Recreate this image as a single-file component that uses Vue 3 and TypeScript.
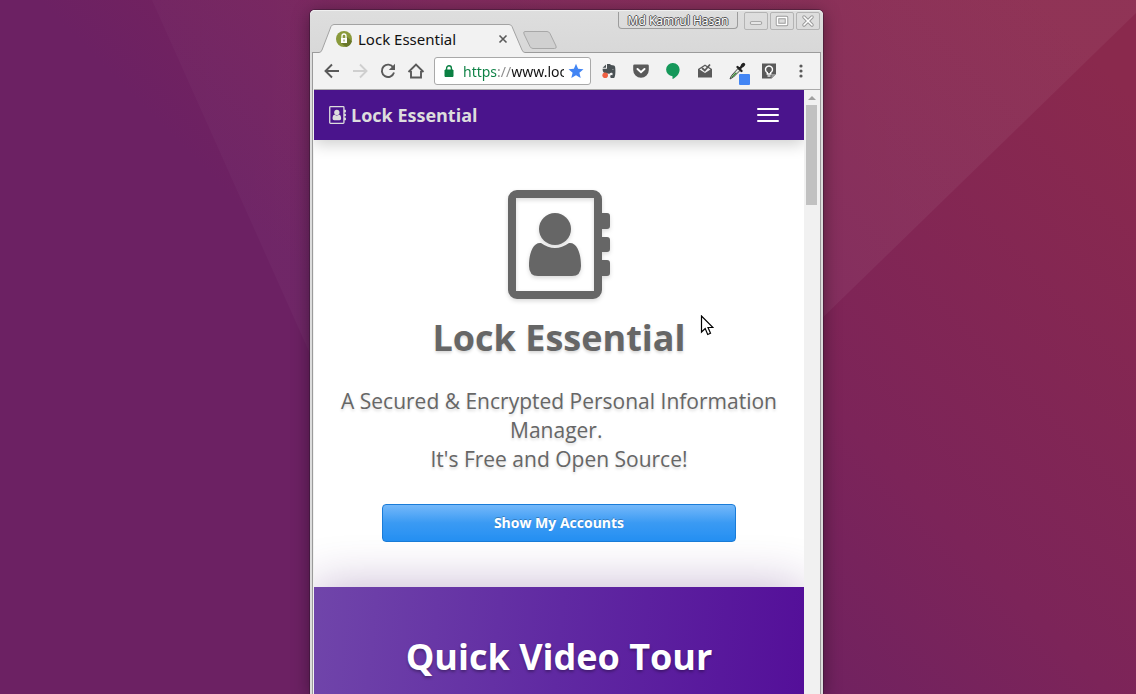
<script setup lang="ts">
import { ref } from 'vue'

const address = ref('https://www.lockessential.com')

interface WindowControl {
  name: string
  path: string
}

const controls: WindowControl[] = [
  { name: 'Minimize', path: 'M6.500 10h9' },
  { name: 'Maximize', path: 'M6.500 4.500h9v7h-9z' },
  { name: 'Close', path: 'M7 4l8 8M15 4l-8 8' },
]
</script>

<template>
  <div class="desktop">
    <svg class="wallpaper" viewBox="0 0 1136 694" preserveAspectRatio="none" aria-hidden="true">
      <defs>
        <linearGradient id="wall" gradientUnits="userSpaceOnUse" x1="620" y1="600" x2="1136" y2="100">
          <stop offset="0" stop-color="#6c2163" />
          <stop offset=".4" stop-color="#7c2459" />
          <stop offset="1" stop-color="#8a294d" />
        </linearGradient>
        <linearGradient id="ray" gradientUnits="userSpaceOnUse" x1="152" y1="0" x2="900" y2="0">
          <stop offset="0" stop-color="#fff" stop-opacity=".02" />
          <stop offset="1" stop-color="#fff" stop-opacity=".05" />
        </linearGradient>
      </defs>
      <path d="M0 0H1136V694H0z" fill="url(#wall)" />
      <path d="M152 0H1136V13L454 676z" fill="url(#ray)" />
    </svg>

    <section class="window">
      <header class="titlebar">
        <div class="tab">
          <svg class="tab-shape" viewBox="0 0 206 29" preserveAspectRatio="none" aria-hidden="true">
            <path d="M0 28.500Q2 28.500 3 26L12 2.500Q13 .5 15 .5H190Q192 .5 193 2.500L203 26Q204 28.500 206 28.500V29H0z" fill="#f2f2f2" />
            <path d="M0 28.500Q2 28.500 3 26L12 2.500Q13 .5 15 .5H190Q192 .5 193 2.500L203 26Q204 28.500 206 28.500" fill="none" stroke="#a3a3a3" />
          </svg>
          <svg class="favicon" viewBox="0 0 16 16" aria-hidden="true">
            <circle cx="8" cy="8" r="8" fill="#8a9a3c" />
            <path d="M11 6l5 4a8 8 0 0 1-6 6l-5-4z" fill="#69772a" />
            <path d="M5 7h6v5H5z" fill="#fff" />
            <path d="M6 7V5a2 2 0 0 1 4 0v2" fill="none" stroke="#fff" stroke-width="1.300" />
            <path d="M7.500 8.500h1v2h-1z" fill="#76853a" />
          </svg>
          <span class="tab-title">Lock Essential</span>
          <button class="tab-close" type="button" aria-label="Close tab">
            <svg viewBox="0 0 10 10"><path d="M1.500 1.500l7 7M8.500 1.500l-7 7" stroke="#5a5a5a" stroke-width="1.600" /></svg>
          </button>
        </div>
        <button class="new-tab" type="button" aria-label="New tab">
          <svg viewBox="0 0 34 18">
            <path d="M2 .5H24Q26 .5 27 2.500L33 15Q34 17.500 31.500 17.500H10Q8 17.500 7 15.500L1 3Q0 .5 2 .5z" fill="#d0d0d0" stroke="#a8a8a8" />
          </svg>
        </button>
        <div class="window-controls">
          <button class="profile" type="button">Md Kamrul Hasan</button>
          <button v-for="c in controls" :key="c.name" class="control" type="button" :aria-label="c.name">
            <svg viewBox="0 0 22 16">
              <path :d="c.path" fill="none" stroke="#999" stroke-width="3.500" stroke-linejoin="round" stroke-linecap="round" />
              <path :d="c.path" fill="none" stroke="#fff" stroke-width="1.600" stroke-linejoin="round" stroke-linecap="round" />
            </svg>
          </button>
        </div>
      </header>

      <div class="frame">
        <nav class="toolbar" aria-label="Browser">
          <button class="nav" type="button" aria-label="Back">
            <svg viewBox="0 0 16 16"><path d="M15 8H2M8 1.500L1.500 8 8 14.500" fill="none" stroke="#5a5a5a" stroke-width="1.900" /></svg>
          </button>
          <button class="nav" type="button" aria-label="Forward">
            <svg viewBox="0 0 16 16"><path d="M1 8h13M8 1.500L14.500 8 8 14.500" fill="none" stroke="#cfcfcf" stroke-width="1.900" /></svg>
          </button>
          <button class="nav" type="button" aria-label="Reload">
            <svg viewBox="0 0 16 16">
              <path d="M13.300 4.500A6.200 6.200 0 1 0 14 9.500" fill="none" stroke="#5a5a5a" stroke-width="1.900" />
              <path d="M15 .8V7H8.800z" fill="#5a5a5a" />
            </svg>
          </button>
          <button class="nav" type="button" aria-label="Home">
            <svg class="home" viewBox="0 0 18 16"><path d="M1.500 9L9 1.500 16.500 9M4 8v6.500h10V8" fill="none" stroke="#5a5a5a" stroke-width="1.900" /></svg>
          </button>

          <div class="omnibox">
            <svg class="padlock" viewBox="0 0 10 12" aria-hidden="true">
              <path d="M1 5h8v6.500H1z" fill="#0b8043" stroke="#0b8043" />
              <path d="M2.600 5V3.200a2.400 2.400 0 0 1 4.800 0V5" fill="none" stroke="#0b8043" stroke-width="1.400" />
            </svg>
            <input v-model="address" class="address" type="text" aria-label="Address" spellcheck="false" />
            <button class="star" type="button" aria-label="Bookmark">
              <svg viewBox="0 0 16 16"><path d="M8 .8l2.100 5 5.400.4-4.100 3.500 1.300 5.300L8 12.200l-4.700 2.800 1.300-5.300L.5 6.200l5.400-.4z" fill="#4285f4" /></svg>
            </button>
          </div>

          <button class="ext" type="button" aria-label="Evernote">
            <svg viewBox="0 0 16 16">
              <path d="M5 1.500v3.200H1.600z" fill="#4a5154" />
              <path d="M6 1h3l1 1 3 .4c1 .3 1.300 1.500 1.400 4.600.1 4-.4 7.500-1.400 8H10c-1-.4-1-2.500 0-3l1.500.2V10c-1.500-.5-2.500 0-3 .8L6 10.600 3 9.800C2 9 1.600 7.500 1.600 5.700H6z" fill="#4a5154" />
              <path d="M11.500 6l1.500.8h-1.600z" fill="#ddd" />
              <circle cx="4.200" cy="12.300" r="2.800" fill="#ee6043" />
            </svg>
          </button>
          <button class="ext" type="button" aria-label="Pocket">
            <svg viewBox="0 0 16 16">
              <path d="M1.500 1.500h13q1.300 0 1.300 1.300V7A7.700 7.700 0 0 1 .2 7V2.800Q.2 1.500 1.500 1.500z" fill="#5a5a5a" />
              <path d="M4.500 6L8 9.200 11.500 6" fill="none" stroke="#fff" stroke-width="2" stroke-linecap="round" />
            </svg>
          </button>
          <button class="ext" type="button" aria-label="Hangouts">
            <svg viewBox="0 0 16 16"><path d="M8 0a6.600 6.600 0 0 0-.5 13.200V16C11 14.500 14.600 11 14.600 6.700A6.600 6.600 0 0 0 8 0z" fill="#15985a" /></svg>
          </button>
          <button class="ext" type="button" aria-label="Inbox">
            <svg viewBox="0 0 16 16">
              <path d="M1 6L8 1.500 15 6v8.500H1z" fill="#5a5a5a" />
              <path d="M2.500 6.500L8 10l5.500-3.500L8 3z" fill="#f2f2f2" />
              <path d="M5 5l2.800 2.500L13 1.500" fill="none" stroke="#5a5a5a" stroke-width="1.800" />
            </svg>
          </button>
          <button class="ext" type="button" aria-label="Colour picker">
            <svg class="dropper" viewBox="0 0 20 22">
              <path d="M3 19L4.500 15.500 11 8.500l2 2L6.500 17z" fill="#dfeadd" stroke="#444" />
              <path d="M4 18l1.500-2.500 3-3 1.500.5-4 4z" fill="#3f8b3b" />
              <path d="M10.500 7L14.500 11M13 8.500L15.500 5.500" stroke="#222" stroke-width="2.400" stroke-linecap="round" />
              <path d="M15.500 5.500L16.500 4.500" stroke="#222" stroke-width="3.400" stroke-linecap="round" />
              <path d="M13 14h9a1 1 0 0 1 1 1v9a1 1 0 0 1-1 1h-9a1 1 0 0 1-1-1v-9a1 1 0 0 1 1-1z" fill="#4285f4" />
            </svg>
          </button>
          <button class="ext" type="button" aria-label="Keep">
            <svg viewBox="0 0 16 16">
              <path d="M1 .5h14V11l-4.500 4.500H1z" fill="#5a5a5a" />
              <path d="M15 11l-4.500 4.500V11z" fill="#999" />
              <path d="M6.300 9.500A3.500 3.500 0 1 1 9.700 9.500V11H6.300z" fill="none" stroke="#fff" stroke-width="1.400" />
              <path d="M6.500 13h3" stroke="#fff" stroke-width="1.300" />
            </svg>
          </button>
          <button class="ext" type="button" aria-label="Menu">
            <svg viewBox="0 0 16 16" fill="#5a5a5a"><circle cx="8" cy="3" r="1.600" /><circle cx="8" cy="8" r="1.600" /><circle cx="8" cy="13" r="1.600" /></svg>
          </button>
        </nav>

        <div class="viewport">
          <div class="page">
            <header class="navbar">
              <a class="brand" href="#home">
                <svg class="brand-icon" viewBox="508 190 102 109" aria-hidden="true">
                  <path d="M517 190h76a9 9 0 0 1 9 9v14h5q3 0 3 3v10q0 3-3 3h-5v8h5q3 0 3 3v9q0 3-3 3h-5v8h5q3 0 3 3v10q0 3-3 3h-5v14a9 9 0 0 1-9 9h-76a9 9 0 0 1-9-9v-91a9 9 0 0 1 9-9zM516 198v93h78v-93z" fill-rule="evenodd" />
                  <circle cx="555" cy="229" r="16" />
                  <path d="M541 243q14 10 28 0c8-1 12 10 12 23q0 10-9 10h-34q-9 0-9-10c0-13 4-24 12-23z" />
                </svg>
                Lock Essential
              </a>
              <button class="burger" type="button" aria-label="Toggle navigation"><span></span><span></span><span></span></button>
            </header>

            <main class="hero">
              <svg class="hero-icon" viewBox="508 190 102 109" aria-hidden="true">
                <path d="M517 190h76a9 9 0 0 1 9 9v14h5q3 0 3 3v10q0 3-3 3h-5v8h5q3 0 3 3v9q0 3-3 3h-5v8h5q3 0 3 3v10q0 3-3 3h-5v14a9 9 0 0 1-9 9h-76a9 9 0 0 1-9-9v-91a9 9 0 0 1 9-9zM516 198v93h78v-93z" fill-rule="evenodd" />
                <circle cx="555" cy="229" r="16" />
                <path d="M541 243q14 10 28 0c8-1 12 10 12 23q0 10-9 10h-34q-9 0-9-10c0-13 4-24 12-23z" />
              </svg>
              <h1>Lock Essential</h1>
              <p class="lead">A Secured &amp; Encrypted Personal Information Manager.&nbsp;<br />It's Free and Open Source!</p>
              <button class="cta" type="button">Show My Accounts</button>
            </main>

            <section class="tour">
              <h2>Quick Video Tour</h2>
            </section>
          </div>
          <div class="scrollbar" aria-hidden="true">
            <svg viewBox="0 0 16 15"><path d="M4 10L8 6l4 4z" fill="#a0a0a0" /></svg>
            <div class="thumb"></div>
          </div>
        </div>
      </div>
    </section>

    <svg class="cursor" viewBox="0 0 14 22" aria-hidden="true">
      <path d="M1.500 1v16l3.700-3.500L7.700 19.500l2.800-1.200L8 12.500h5z" fill="#fff" stroke="#000" stroke-width="1.200" />
    </svg>
  </div>
</template>

<style>
body {
  margin: 0;
  background: #6c2163;
}
</style>

<style scoped>
.desktop {
  position: relative;
  display: grid;
  grid-template-columns: 310fr 513fr 313fr;
  box-sizing: border-box;
  height: 100vh;
  padding-top: 10px;
  overflow: hidden;
  font-family: "Open Sans", "Noto Sans", sans-serif;
}
.wallpaper {
  position: absolute;
  inset: 0;
  width: 100%;
  height: 100%;
}
button {
  padding: 0;
  border: 0;
  background: none;
  font-family: inherit;
}
svg {
  display: block;
}
.window {
  position: relative;
  grid-column: 2;
  display: flex;
  flex-direction: column;
  min-width: 0;
  min-height: 0;
  border-radius: 5px 5px 0 0;
  background: #dcdcdc;
  box-shadow: 0 0 0 1px rgba(40, 20, 40, 0.4), 0 3px 18px rgba(0, 0, 0, 0.4);
}
.titlebar {
  display: flex;
  align-items: flex-end;
  height: 43px;
  padding: 0 3px 0 9px;
  border-radius: 5px 5px 0 0;
  box-sizing: border-box;
  background: linear-gradient(#dedede, #d8d8d8);
  box-shadow: inset 0 1px #f0f0f0;
}
.tab {
  position: relative;
  z-index: 1;
  display: flex;
  align-items: center;
  box-sizing: border-box;
  width: 206px;
  height: 29px;
  padding: 0 17px 0 17px;
}
.tab-shape {
  position: absolute;
  inset: 0;
  width: 100%;
  height: 100%;
}
.favicon {
  position: relative;
  width: 16px;
  height: 16px;
  margin-right: 6px;
}
.tab-title {
  position: relative;
  flex: 1;
  font-family: "Noto Sans", sans-serif;
  font-size: 15px;
  color: #111;
  white-space: nowrap;
}
.tab-close {
  position: relative;
  width: 10px;
  height: 10px;
}
.new-tab {
  width: 34px;
  height: 18px;
  margin: 0 0 4px -2px;
}
.window-controls {
  display: flex;
  align-self: flex-start;
  gap: 2px;
  margin-left: auto;
  padding-top: 2px;
}
.profile {
  width: 120px;
  height: 17px;
  margin-right: 4px;
  border: 1px solid #9c9c9c;
  border-top: 0;
  border-radius: 0 0 4px 4px;
  font-family: "Noto Sans", sans-serif;
  font-size: 12px;
  line-height: 15px;
  color: #fff;
  white-space: nowrap;
  text-shadow: 1px 0 #555, -1px 0 #555, 0 1px #555, 0 -1px #555;
}
.control {
  width: 24px;
  height: 18px;
  border: 1px solid #b4b4b4;
  border-radius: 2px;
}
.control svg {
  width: 22px;
  height: 16px;
}
.frame {
  display: flex;
  flex: 1;
  flex-direction: column;
  min-height: 0;
  margin: -1px 2px 0;
  padding-left: 1px;
  border: 1px solid #9b9b9b;
  border-bottom: 0;
  background: #f2f2f2;
}
.toolbar {
  display: flex;
  align-items: center;
  box-sizing: border-box;
  height: 37px;
  padding: 0 3px 0 4px;
  border-bottom: 1px solid #aaa;
}
.nav,
.ext {
  display: grid;
  place-items: center;
  flex: none;
  width: 28px;
  height: 28px;
}
.ext {
  width: 32px;
}
.nav svg,
.ext svg {
  width: 16px;
  height: 16px;
}
.nav .home {
  width: 18px;
}
.ext .dropper {
  width: 20px;
  height: 22px;
  overflow: visible;
}
.omnibox {
  display: flex;
  flex: 1;
  align-items: center;
  gap: 9px;
  min-width: 0;
  height: 26px;
  margin: 0 2px 0 4px;
  padding: 0 6px 0 9px;
  border: 1px solid #a9a9a9;
  border-radius: 3px;
  background: #fff;
}
.padlock {
  flex: none;
  width: 10px;
  height: 12px;
}
.address {
  flex: 1;
  min-width: 0;
  height: 24px;
  padding: 0;
  border: 0;
  outline: 0;
  background: linear-gradient(90deg, #0b8043 35px, #8a8a8a 35px 49px, #111 49px);
  background-clip: text;
  -webkit-background-clip: text;
  color: transparent;
  font-family: "Noto Sans", sans-serif;
  font-size: 14px;
}
.star {
  flex: none;
  width: 16px;
  height: 16px;
  margin-left: -5px;
}
.viewport {
  display: flex;
  flex: 1;
  min-height: 0;
}
.page {
  display: flex;
  flex: 1;
  flex-direction: column;
  min-width: 0;
  overflow: hidden;
  background: #fff;
}
.navbar {
  position: relative;
  z-index: 1;
  display: flex;
  flex: none;
  align-items: center;
  justify-content: space-between;
  height: 50px;
  padding: 0 25px 0 15px;
  background: #4a148c;
  box-shadow: 0 4px 16px rgba(0, 0, 0, 0.2);
}
.brand {
  display: flex;
  align-items: center;
  gap: 5px;
  color: #ddd;
  font-size: 18px;
  font-weight: 700;
  text-decoration: none;
}
.brand-icon {
  width: 17px;
  height: 18px;
  fill: currentColor;
}
.burger {
  display: flex;
  flex-direction: column;
  gap: 4px;
  width: 22px;
}
.burger span {
  height: 2px;
  border-radius: 1px;
  background: #fff;
}
.hero {
  display: flex;
  flex: none;
  flex-direction: column;
  align-items: center;
  padding: 50px 9px 45px;
  color: #666;
  text-align: center;
  text-shadow: 0 2px 3px rgba(0, 0, 0, 0.15);
}
.hero-icon {
  width: 102px;
  height: 109px;
  fill: #666;
  filter: drop-shadow(0 2px 2px rgba(0, 0, 0, 0.15));
}
h1,
h2 {
  margin: 0;
  font-size: 36px;
  font-weight: 700;
  line-height: 40px;
}
h1 {
  margin-top: 19px;
}
.lead {
  margin: 29px 0 30px;
  font-size: 21px;
  line-height: 29px;
}
.cta {
  width: 75%;
  height: 38px;
  padding-bottom: 2px;
  border: 1px solid #1a7cd8;
  border-radius: 4px;
  background: linear-gradient(#74b8fa, #3a9af3 50%, #2590f3);
  color: #fff;
  font-size: 14px;
  font-weight: 700;
  text-shadow: 0 -1px rgba(0, 0, 0, 0.25);
}
.tour {
  position: relative;
  flex: 1;
  padding-top: 50px;
  background: linear-gradient(95deg, #7045aa, #6029a2 50%, #540f99);
  box-shadow: 0 0 50px rgba(74, 20, 110, 0.33);
  color: #fff;
  text-align: center;
  text-shadow: 0 2px 3px rgba(0, 0, 0, 0.3);
}
.scrollbar {
  flex: none;
  width: 16px;
  background: #f1f1f1;
}
.scrollbar svg {
  width: 16px;
  height: 15px;
}
.thumb {
  height: 100px;
  margin: 0 3px 0 2px;
  background: #c1c1c1;
}
.cursor {
  position: absolute;
  top: 315px;
  left: 700px;
  width: 14px;
  height: 22px;
}
</style>
